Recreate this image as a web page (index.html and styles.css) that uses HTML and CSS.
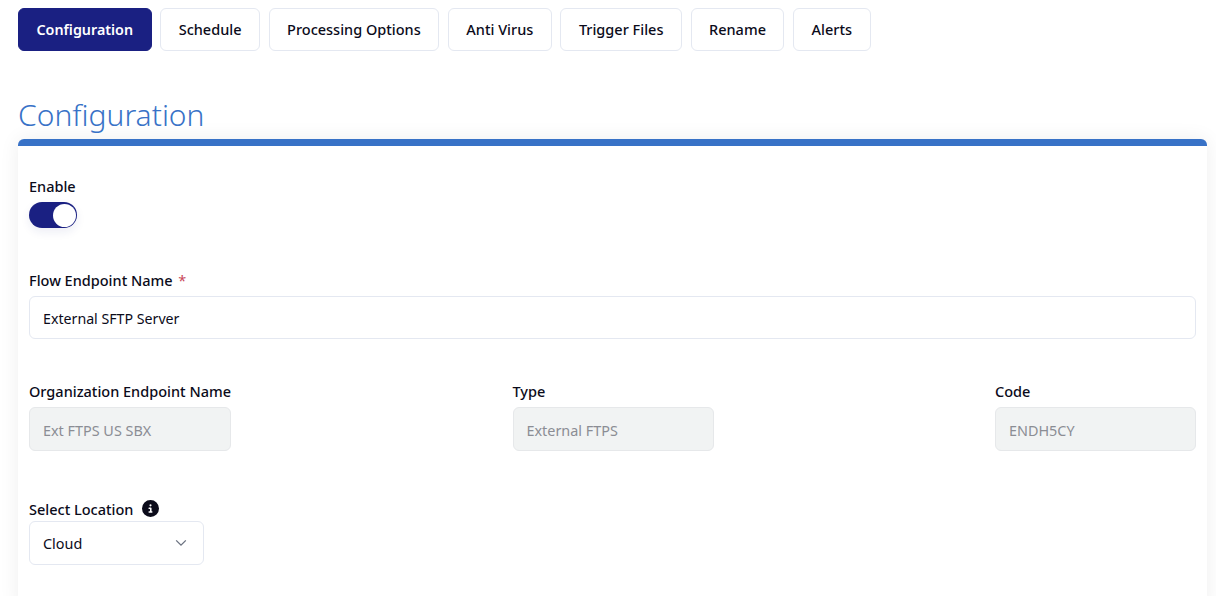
FILE: index.html
```html
<!DOCTYPE html>
<html lang="en">
<head>
<meta charset="utf-8">
<title>Configuration</title>
<link rel="stylesheet" href="styles.css">
</head>
<body>
<nav class="tabs">
  <button class="tab tab-active">Configuration</button>
  <button class="tab">Schedule</button>
  <button class="tab">Processing Options</button>
  <button class="tab">Anti Virus</button>
  <button class="tab">Trigger Files</button>
  <button class="tab">Rename</button>
  <button class="tab">Alerts</button>
</nav>
<h1 class="title">Configuration</h1>
<section class="card">
  <div class="field-enable">
    <div class="label">Enable</div>
    <div class="toggle"><span class="knob"></span></div>
  </div>
  <div class="field-name">
    <div class="label">Flow Endpoint Name <span class="req">*</span></div>
    <div class="input">External SFTP Server</div>
  </div>
  <div class="row">
    <div class="col">
      <div class="label">Organization Endpoint Name</div>
      <div class="input input-disabled">Ext FTPS US SBX</div>
    </div>
    <div class="col">
      <div class="label">Type</div>
      <div class="input input-disabled">External FTPS</div>
    </div>
    <div class="col">
      <div class="label">Code</div>
      <div class="input input-disabled">ENDH5CY</div>
    </div>
  </div>
  <div class="field-location">
    <div class="label label-icon">Select Location
      <svg class="info" viewBox="0 0 512 512" aria-hidden="true"><path fill="#0b0b1a" d="M256 512A256 256 0 1 0 256 0a256 256 0 1 0 0 512zM216 336h24V272H216c-13.300 0-24-10.700-24-24s10.700-24 24-24h48c13.300 0 24 10.700 24 24v88h8c13.300 0 24 10.700 24 24s-10.700 24-24 24H216c-13.300 0-24-10.700-24-24s10.700-24 24-24zm40-208a32 32 0 1 1 0 64 32 32 0 1 1 0-64z"/></svg>
    </div>
    <div class="select">
      <span>Cloud</span>
      <svg class="chev" viewBox="0 0 16 16" aria-hidden="true"><path d="M2.500 5l5.500 5.500L13.500 5" fill="none" stroke="#6b7280" stroke-width="1.500"/></svg>
    </div>
  </div>
</section>
</body>
</html>
```
FILE: styles.css
```css
* { box-sizing: border-box; }
html, body { margin: 0; padding: 0; background: #fff; overflow: hidden; height: 596px; }
body { font-family: "Noto Sans", "Open Sans", sans-serif; color: #0b0b1a; padding: 8px 9px 0 18px; }
.tabs { display: flex; gap: 8.6px; }
.tab {
  height: 43px; padding: 0 17.5px 2px; border: 1px solid #e4e8f1; border-radius: 6px; background: #fff;
  font: 500 14.5px "Noto Sans", sans-serif; color: #0b0b1a;
}
.tab-active { background: #1a2082; border-color: #1a2082; color: #fff; font-weight: 600; font-size: 14.3px; padding-bottom: 0; }
.title { margin: 42px 0 2px; font-size: 30px; font-weight: 300; line-height: 44px; height: 44px; color: #3872c7; }
.card {
  border-top: 7px solid #3872c7; border-radius: 6px 6px 0 0; background: #fff; height: 470px;
  box-shadow: 0 0 20px rgba(0,0,0,.07); padding: 31px 11px 0;
}
.label { font-size: 14.5px; font-weight: 500; line-height: 19px; }
.req { color: #c9475a; font-weight: 400; margin-left: 2px; }
.toggle { width: 48px; height: 26px; margin-top: 6px; border-radius: 13px; background: #1a2082; display: flex; justify-content: flex-end; align-items: center; padding: 0 1px; box-shadow: 0 4px 10px rgba(26,32,130,.08); }
.knob { width: 23px; height: 23px; border-radius: 50%; background: #fff; }
.field-name { margin-top: 43px; }
.input {
  height: 43px; margin-top: 6px; padding: 0 13px; border: 1px solid #e4e8f1; border-radius: 6px; background: #fff;
  font-size: 14.2px; line-height: 43px;
}
.input-disabled { height: 44px; background: #f1f3f3; color: #8b8d94; border-color: #e6e8ea; line-height: 46px; font-size: 14.4px; }
.row { display: flex; justify-content: space-between; margin-top: 43px; }
.col { width: 201px; }
.col:first-child { width: 202px; }
.field-location { margin-top: 49px; width: 175px; }
.label-icon { display: flex; align-items: center; gap: 9px; height: 18px; }
.info { width: 17px; height: 17px; margin-top: -2px; }
.select {
  height: 44px; margin-top: 3px; padding: 0 13px; display: flex; align-items: center; justify-content: space-between;
  border: 1px solid #e4e8f1; border-radius: 6px; font-size: 14.4px; background: #fff;
}
.chev { width: 14px; height: 14px; margin-right: 2px; }
```
